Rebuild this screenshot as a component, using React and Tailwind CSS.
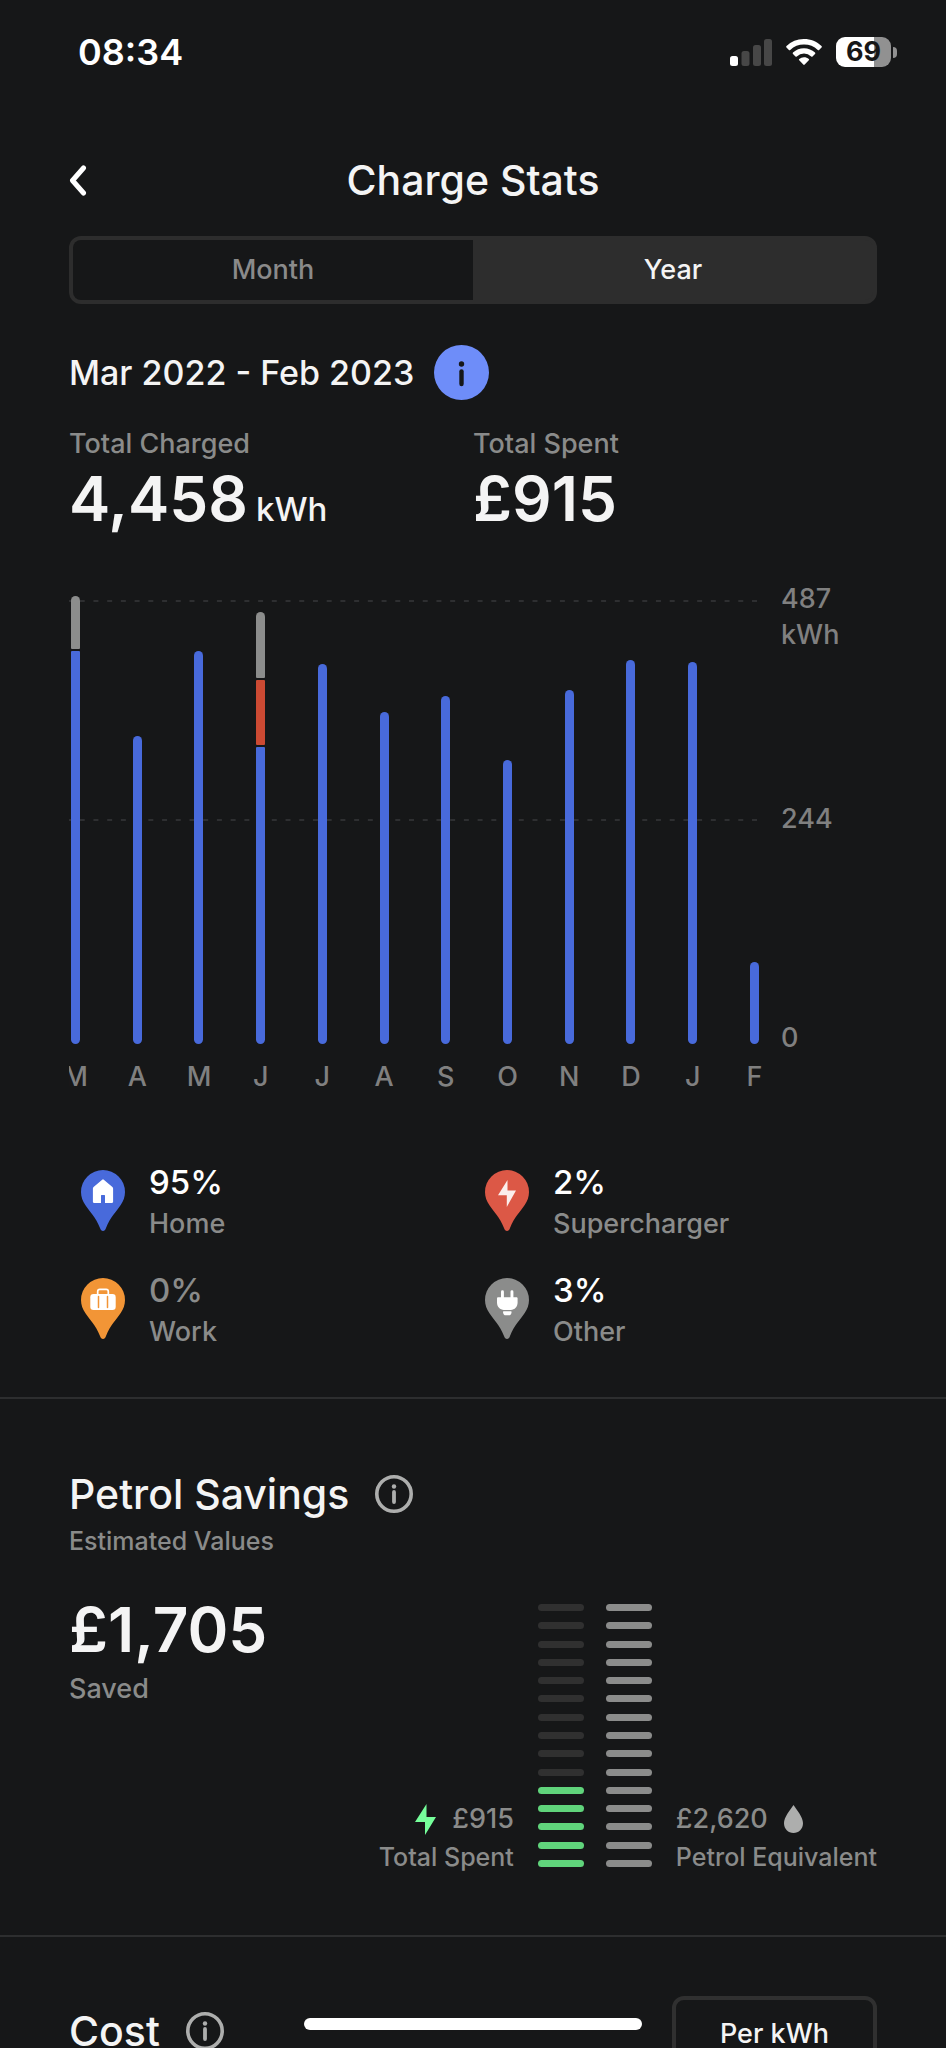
const months = [
    { label: "M", segments: [{ kind: "home", size: 393 }, { kind: "other", size: 53 }] },
    { label: "A", segments: [{ kind: "home", size: 308 }] },
    { label: "M", segments: [{ kind: "home", size: 393 }] },
    { label: "J", segments: [{ kind: "home", size: 297 }, { kind: "supercharger", size: 65 }, { kind: "other", size: 66 }] },
    { label: "J", segments: [{ kind: "home", size: 380 }] },
    { label: "A", segments: [{ kind: "home", size: 332 }] },
    { label: "S", segments: [{ kind: "home", size: 348 }] },
    { label: "O", segments: [{ kind: "home", size: 284 }] },
    { label: "N", segments: [{ kind: "home", size: 354 }] },
    { label: "D", segments: [{ kind: "home", size: 384 }] },
    { label: "J", segments: [{ kind: "home", size: 382 }] },
    { label: "F", segments: [{ kind: "home", size: 82 }] },
];

const barColors = {
    home: "bg-[#486adb]",
    supercharger: "bg-[#cc4a33]",
    other: "bg-[#8c8d8c]",
};

const sources = [
    { name: "Home", share: "95%", color: "#486adb", icon: <HomeGlyph /> },
    { name: "Supercharger", share: "2%", color: "#dc5846", icon: <BoltGlyph /> },
    { name: "Work", share: "0%", color: "#f29536", icon: <CaseGlyph />, muted: true },
    { name: "Other", share: "3%", color: "#8b8c8b", icon: <PlugGlyph /> },
];

function HomeGlyph() {
    return (
        <path
            d="M21.2 9.700a1.200 1.200 0 0 1 1.600 0l8.600 7.400c.5.4.7.9.7 1.500v13.200c0 .7-.4 1.100-1.100 1.100h-7v-7.300c0-.4-.2-.6-.6-.6h-2.800c-.4 0-.6.2-.6.6v7.300h-7c-.7 0-1.100-.4-1.100-1.100V18.600c0-.6.2-1.100.7-1.500z"
            fill="#fff"
        />
    );
}

function BoltGlyph() {
    return <path d="M22.500 10v10.600H31L21.800 37V25.200H13z" fill="#fbeeec" />;
}

function CaseGlyph() {
    return (
        <g>
            <path d="M16.700 17v-3.500c0-1.300.8-2.100 2.100-2.100h6.400c1.300 0 2.100.8 2.100 2.100V17" fill="none" stroke="#fff" strokeWidth="1.700" />
            <rect x="9.300" y="16" width="25.400" height="16" rx="3.200" fill="#fff" />
            <path d="M17.500 18.500v11M26.500 18.500v11" stroke="#f29536" strokeWidth="1.500" strokeLinecap="round" />
        </g>
    );
}

function PlugGlyph() {
    return (
        <g fill="#fff">
            <rect x="16" y="12.300" width="2.900" height="9" rx="1.400" />
            <rect x="25.500" y="12.300" width="2.900" height="9" rx="1.400" />
            <path d="M13.300 19.300h18c.8 0 1.300.5 1.300 1.300v4c0 4.200-3 7.400-6.800 7.400h-7c-3.800 0-6.800-3.200-6.800-7.400v-4c0-.8.5-1.300 1.300-1.300z" />
            <path d="M18.600 33.300h7.400c.4 0 .6.2.6.6 0 2-1.200 3.400-2.900 3.400h-2.800c-1.700 0-2.900-1.400-2.900-3.400 0-.4.2-.6.6-.6z" />
        </g>
    );
}

function Pin({ color, children }) {
    return (
        <svg viewBox="0 0 44 62" className="h-[62px] w-11 shrink-0" aria-hidden="true">
            <path d="M22 0a22 22 0 0 1 22 22c0 5-1.700 9-4.300 13-4.500 7-10.500 12-14.700 23-1 4-5 4-6 0C14.800 47 8.800 42 4.300 35 1.700 31 0 27 0 22A22 22 0 0 1 22 0z" fill={color} />
            {children}
        </svg>
    );
}

function InfoButton({ label }) {
    return (
        <button type="button" aria-label={label} className="shrink-0">
            <svg viewBox="0 0 38 38" className="size-[38px]" fill="none" stroke="#adaead">
                <circle cx="19" cy="19" r="17.200" strokeWidth="3.600" />
                <path d="M19 17v10" strokeWidth="3.800" strokeLinecap="round" />
                <circle cx="19" cy="11.500" r="2.200" fill="#adaead" stroke="none" />
            </svg>
        </button>
    );
}

function StatusBar() {
    return (
        <div className="flex h-[104px] items-center justify-between pr-[49px] pl-[78px]">
            <time className="text-4xl font-semibold text-white">08:34</time>
            <div className="flex items-center gap-[14px]">
                <svg viewBox="0 0 42 27" className="h-[27px] w-[42px]" aria-label="Signal">
                    <rect x="0" y="17" width="8" height="10" rx="2.500" fill="#fff" />
                    <rect x="11.500" y="12" width="8" height="15" rx="2.500" fill="#474747" />
                    <rect x="23" y="6" width="8" height="21" rx="2.500" fill="#474747" />
                    <rect x="34" y="0" width="8" height="27" rx="2.500" fill="#474747" />
                </svg>
                <svg viewBox="0 0 36 27" className="h-[27px] w-9" fill="#fff" aria-label="Wi-Fi">
                    <path d="M18 0c6.700 0 12.900 2.600 17.500 7 .5.500.5 1 0 1.500l-2.400 2.400c-.4.4-.9.4-1.300 0A20 20 0 0 0 18 5.500 20 20 0 0 0 4.200 10.900c-.4.4-.9.4-1.300 0L.5 8.500C0 8 0 7.500.5 7A25 25 0 0 1 18 0z" />
                    <path d="M18 9.200c4.200 0 8 1.600 11 4.300.5.500.5 1 0 1.500l-2.500 2.400c-.4.4-.9.4-1.300 0a10.700 10.700 0 0 0-14.400 0c-.4.4-.9.4-1.300 0L7 15c-.5-.5-.5-1 0-1.500a16.200 16.200 0 0 1 11-4.300z" />
                    <path d="M18 18.200c1.800 0 3.500.6 4.800 1.700.5.5.5.9 0 1.400l-4.100 4.200c-.5.5-1 .5-1.400 0l-4.100-4.200c-.5-.5-.5-.9 0-1.400a7.500 7.500 0 0 1 4.800-1.700z" />
                </svg>
                <div className="flex items-center gap-[2px]">
                    <div className="flex h-[30px] w-[55px] items-center justify-center rounded-[9px] bg-linear-to-r from-white from-69% to-[#919191] to-69%">
                        <span className="text-[27px] leading-[30px] font-bold text-[#161718]">69</span>
                    </div>
                    <div className="h-[11px] w-[4px] rounded-r-full bg-[#919191]" />
                </div>
            </div>
        </div>
    );
}

function GridLine() {
    return (
        <svg className="h-[2px] w-full" aria-hidden="true">
            <line x1="-3" x2="100%" y1="1" y2="1" stroke="#2e2f31" strokeWidth="2" strokeDasharray="5 8.72" />
        </svg>
    );
}

function ChargeChart() {
    return (
        <div className="mt-[52px] flex">
            <div className="min-w-0 flex-1 overflow-hidden pr-2">
                <div className="relative flex h-[448px] items-end justify-between pl-[2px]">
                    <div className="absolute inset-x-0 top-1 flex flex-col gap-[217px]">
                        <GridLine />
                        <GridLine />
                    </div>
                    {months.map((month, i) => (
                        <div key={i} className="relative flex w-[9px] flex-col-reverse gap-[2px] overflow-hidden rounded-full">
                            {month.segments.map((s) => (
                                <div key={s.kind} className={`rounded-[1px] ${barColors[s.kind]}`} style={{ height: s.size }} />
                            ))}
                        </div>
                    ))}
                </div>
                <div className="mt-[15px] flex justify-between pl-[2px] text-[27px] leading-9 font-medium text-[#808080]">
                    {months.map((month, i) => (
                        <span key={i} className="flex w-[9px] justify-center">{month.label}</span>
                    ))}
                </div>
            </div>
            <div className="ml-[14px] flex h-[460px] w-24 flex-col justify-between text-[27px] leading-9 font-medium text-[#808080]">
                <span className="-mt-[15px] h-9 w-14">487 kWh</span>
                <span>244</span>
                <span>0</span>
            </div>
        </div>
    );
}

function Gauge({ filled, color, empty }) {
    return (
        <div className="flex h-[263px] w-[46px] flex-col justify-between">
            {Array.from({ length: 15 }, (_, i) => (
                <div key={i} className={`h-[7px] rounded-full ${i >= 15 - filled ? color : empty}`} />
            ))}
        </div>
    );
}

export default function App() {
    return (
        <div className="relative h-screen overflow-hidden bg-[#161718] font-['Inter',sans-serif] text-[#f4f4f4]">
            <StatusBar />

            <header className="mt-[46px] grid grid-cols-[1fr_auto_1fr] items-center px-[69px]">
                <button type="button" aria-label="Back" className="w-5">
                    <svg viewBox="0 0 18 31" className="h-[31px] w-[18px]" fill="none" stroke="#fff" strokeWidth="5" strokeLinecap="round" strokeLinejoin="round">
                        <path d="M14.500 3 3.500 15.500l11 12.500" />
                    </svg>
                </button>
                <h1 className="text-[41px] leading-[60px] font-medium">Charge Stats</h1>
            </header>

            <main>
                <section className="px-[69px]">
                    <div className="mt-[26px] flex h-[68px] rounded-xl border-4 border-[#2d2d2d] bg-[#2d2d2d] text-[27px] font-medium">
                        <button type="button" className="flex-1 rounded-l-lg bg-[#161718] text-[#8a8a8a]">Month</button>
                        <button type="button" aria-pressed="true" className="flex-1">Year</button>
                    </div>

                    <div className="mt-[41px] flex items-center gap-5">
                        <h2 className="text-[34px] font-medium">Mar 2022 - Feb 2023</h2>
                        <button type="button" aria-label="About this period">
                            <svg viewBox="0 0 55 55" className="size-[55px]">
                                <circle cx="27.500" cy="27.500" r="27.500" fill="#6e8df9" />
                                <circle cx="27.500" cy="19" r="2.700" fill="#161718" />
                                <path d="M27.500 26.500v12.500" stroke="#161718" strokeWidth="4.400" strokeLinecap="round" />
                            </svg>
                        </button>
                    </div>

                    <div className="mt-6 grid grid-cols-2">
                        <div>
                            <p className="text-[27px] leading-10 font-medium text-[#8a8b8a]">Total Charged</p>
                            <p className="text-[62px] leading-[70px] font-semibold">
                                4,458<span className="ml-2 text-[33px] font-medium">kWh</span>
                            </p>
                        </div>
                        <div>
                            <p className="text-[27px] leading-10 font-medium text-[#8a8b8a]">Total Spent</p>
                            <p className="text-[62px] leading-[70px] font-semibold">£915</p>
                        </div>
                    </div>

                    <ChargeChart />

                    <div className="mt-[62px] grid grid-cols-2 gap-y-5">
                        {sources.map((source) => (
                            <div key={source.name} className="flex items-center gap-6 pl-3">
                                <Pin color={source.color}>{source.icon}</Pin>
                                <div className="pt-1">
                                    <p className={`text-[33px] leading-[42px] font-medium ${source.muted ? "text-[#8a8b8a]" : "text-white"}`}>{source.share}</p>
                                    <p className="text-[27px] leading-[42px] font-medium text-[#8a8b8a]">{source.name}</p>
                                </div>
                            </div>
                        ))}
                    </div>
                </section>

                <section className="mt-11 border-t-2 border-[#2d2e2f] px-[69px] pt-[68px]">
                    <div className="flex items-center gap-[26px]">
                        <h2 className="text-[41px] leading-[54px] font-medium">Petrol Savings</h2>
                        <InfoButton label="About petrol savings" />
                    </div>
                    <p className="text-[25px] leading-10 font-medium text-[#8a8b8a]">Estimated Values</p>

                    <div className="mt-[34px] flex justify-between">
                        <div>
                            <p className="text-[62px] leading-[70px] font-semibold">£1,705</p>
                            <p className="mt-1 text-[27px] leading-10 font-medium text-[#8a8b8a]">Saved</p>
                        </div>
                        <div className="flex items-end gap-6 pt-[9px] text-[#8a8b8a]">
                            <div className="-mb-2 text-right font-medium">
                                <p className="flex items-center justify-end gap-4 text-[27px] leading-10">
                                    <svg viewBox="0 0 21 31" className="h-[31px] w-[21px]" aria-hidden="true">
                                        <path d="M11.500 0v13H21L10 31V18H0z" fill="#76ff9b" />
                                    </svg>
                                    £915
                                </p>
                                <p className="text-[25px] leading-9">Total Spent</p>
                            </div>
                            <div className="flex gap-[22px]">
                                <Gauge filled={5} color="bg-[#60d47b]" empty="bg-[#303030]" />
                                <Gauge filled={15} color="bg-[#8b8c8b]" empty="bg-[#303030]" />
                            </div>
                            <div className="-mb-2 font-medium">
                                <p className="flex items-center gap-4 text-[27px] leading-10">
                                    £2,620
                                    <svg viewBox="0 0 19 28" className="h-7 w-[19px]" aria-hidden="true">
                                        <path d="M9.500 0C13 5.500 19 12 19 18.300 19 24 14.800 28 9.500 28S0 24 0 18.300C0 12 6 5.500 9.500 0z" fill="#adaead" />
                                    </svg>
                                </p>
                                <p className="text-[25px] leading-9">Petrol Equivalent</p>
                            </div>
                        </div>
                    </div>
                </section>

                <section className="mt-[68px] flex items-start justify-between border-t-2 border-[#2d2e2f] px-[69px] pt-[59px]">
                    <div className="flex h-[70px] items-center gap-[26px]">
                        <h2 className="text-[41px] leading-[54px] font-medium">Cost</h2>
                        <InfoButton label="About cost" />
                    </div>
                    <button type="button" className="h-[76px] w-[205px] rounded-xl border-4 border-[#303030] text-[27px] font-medium">
                        Per kWh
                    </button>
                </section>
            </main>

            {/* Home indicator */}
            <div className="absolute bottom-[18px] left-1/2 h-3 w-[338px] -translate-x-1/2 rounded-full bg-white" />
        </div>
    );
}
